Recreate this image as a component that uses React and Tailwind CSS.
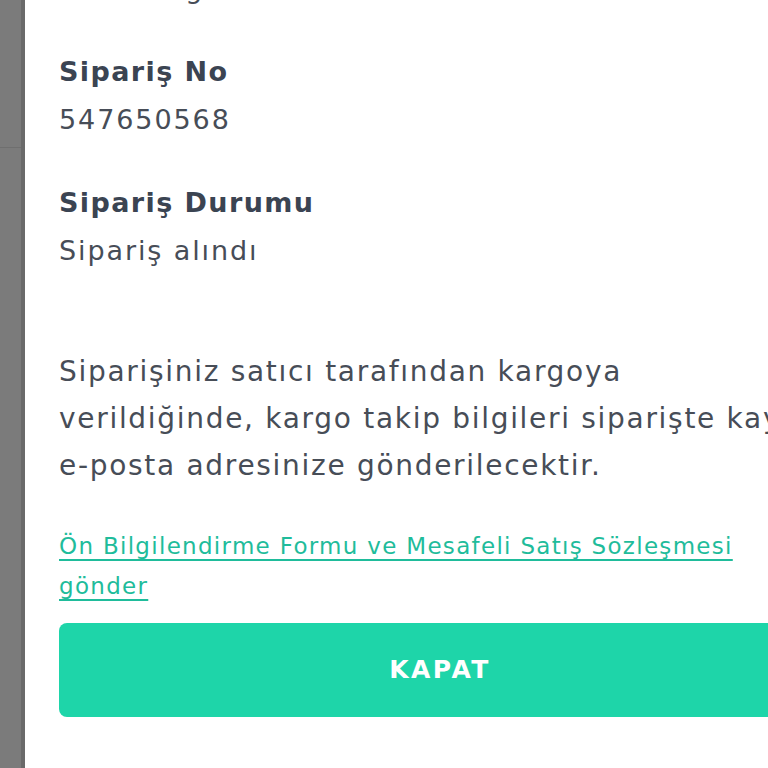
export default function App() {
  const font = { fontFamily: '"DejaVu Sans", "Noto Sans", sans-serif' };
  return (
    <div className="flex min-h-screen bg-white overflow-hidden" style={font}>
      <div className="w-[25px] shrink-0 flex">
        <div className="flex-1 flex flex-col">
          <div className="h-[148px] bg-[#7b7b7b] border-b border-[#6f6f6f]"></div>
          <div className="flex-1 bg-[#7b7b7b]"></div>
        </div>
        <div className="w-[4px] bg-[#6a6a6a]"></div>
      </div>
      <div className="flex-1 bg-white pl-[34px] overflow-hidden">
        <div className="w-[762px]">
          <p className="mt-[-35px] text-[27px] leading-[48px] tracking-[1.8px] text-[#474d57]">Hızlı Kargo</p>

          <div className="mt-[35px]">
            <h3 className="text-[27px] leading-[48px] font-bold tracking-[1.4px] text-[#3b4452]">Sipariş No</h3>
            <p className="text-[27px] leading-[48px] tracking-[1.9px] text-[#474d57]">547650568</p>
          </div>

          <div className="mt-[35px]">
            <h3 className="text-[27px] leading-[48px] font-bold tracking-[1.4px] text-[#3b4452]">Sipariş Durumu</h3>
            <p className="text-[27px] leading-[48px] tracking-[1.9px] text-[#474d57]">Sipariş alındı</p>
          </div>

          <p className="mt-[73px] text-[28px] leading-[47px] tracking-[1.7px] text-[#474d57] whitespace-pre">
            {"Siparişiniz satıcı tarafından kargoya\nverildiğinde, kargo takip bilgileri siparişte kayıtlı\ne-posta adresinize gönderilecektir."}
          </p>

          <a
            href="#"
            className="block mt-[37px] text-[23px] leading-[40px] tracking-[1.3px] text-[#1fbc9b] underline underline-offset-[5px] decoration-[2px]"
          >
            Ön Bilgilendirme Formu ve Mesafeli Satış Sözleşmesi
            <br />
            gönder
          </a>

          <button className="mt-[17px] w-full h-[94px] rounded-[8px] bg-[#1ed5a9] text-white text-[25px] font-bold tracking-[2.5px] flex items-center justify-center">
            KAPAT
          </button>
        </div>
      </div>
    </div>
  );
}
